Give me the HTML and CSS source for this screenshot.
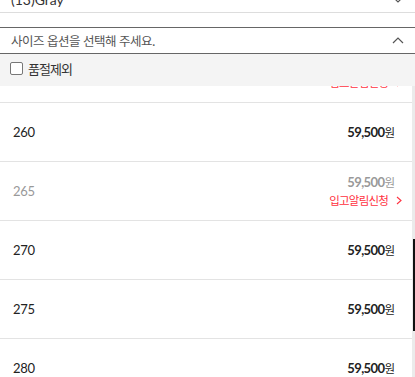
FILE: index.html
```html
<!DOCTYPE html>
<html lang="ko">
<head>
  <meta charset="UTF-8" />
  <title>사이즈 옵션</title>
  <link rel="stylesheet" href="styles.css">
</head>
<body>
  <div class="select color-box">
    <span>(13)Gray</span>
    <svg class="chev" width="10" height="6" viewBox="0 0 10 6"><path d="M1 1 L5 5 L9 1" fill="none" stroke="#555" stroke-width="1.2"/></svg>
  </div>

  <div class="select size-box">
    <span>사이즈 옵션을 선택해 주세요.</span>
    <svg class="chev" width="12" height="7" viewBox="0 0 12 7"><path d="M1 6 L6 1 L11 6" fill="none" stroke="#555" stroke-width="1.2"/></svg>
  </div>

  <div class="filter">
    <label><span class="check"></span>품절제외</label>
  </div>

  <div class="list">
    <ul class="rows">
      <li class="row soldout">
        <span class="size">255</span>
        <div class="right">
          <span class="price">59,500<em>원</em></span>
          <a class="notify">입고알림신청<svg width="6" height="9" viewBox="0 0 6 9"><path d="M1 1 L5 4.5 L1 8" fill="none" stroke="#ff3140" stroke-width="1.1"/></svg></a>
        </div>
      </li>
      <li class="row">
        <span class="size">260</span>
        <div class="right"><span class="price">59,500<em>원</em></span></div>
      </li>
      <li class="row soldout">
        <span class="size">265</span>
        <div class="right">
          <span class="price">59,500<em>원</em></span>
          <a class="notify">입고알림신청<svg width="6" height="9" viewBox="0 0 6 9"><path d="M1 1 L5 4.5 L1 8" fill="none" stroke="#ff3140" stroke-width="1.1"/></svg></a>
        </div>
      </li>
      <li class="row">
        <span class="size">270</span>
        <div class="right"><span class="price">59,500<em>원</em></span></div>
      </li>
      <li class="row">
        <span class="size">275</span>
        <div class="right"><span class="price">59,500<em>원</em></span></div>
      </li>
      <li class="row">
        <span class="size">280</span>
        <div class="right"><span class="price">59,500<em>원</em></span></div>
      </li>
      <li class="row">
        <span class="size">285</span>
        <div class="right"><span class="price">59,500<em>원</em></span></div>
      </li>
    </ul>
    <div class="track"><div class="thumb"></div></div>
  </div>
</body>
</html>
```

FILE: styles.css
```css
body {
  margin: 0;
  width: 415px;
  font-family: "Noto Sans CJK KR", "Noto Sans", sans-serif;
  color: #222;
  background: #fff;
}
.select {
  display: flex;
  align-items: center;
  justify-content: space-between;
  padding: 0 11px 0 11px;
  height: 25px;
}
.color-box {
  margin-top: -13px;
  border-bottom: 1px solid #ddd;
  font-family: "Lato", "Noto Sans CJK KR", sans-serif;
  font-size: 14px;
  color: #333;
}
.size-box {
  margin-top: 14px;
  border-top: 1px solid #666;
  border-bottom: 1px solid #666;
  font-size: 12.5px;
  color: #555;
  letter-spacing: -0.5px;
}
.color-box .chev {
  margin-right: 1px;
}
.filter {
  background: #f4f4f4;
  height: 32px;
  box-sizing: border-box;
  padding: 0 0 3px 10px;
  display: flex;
  align-items: center;
}
.filter label {
  display: flex;
  align-items: center;
  font-size: 13px;
  letter-spacing: -1px;
  color: #333;
}
.check {
  width: 11px;
  height: 11px;
  border: 1px solid #777;
  border-radius: 2px;
  background: #fff;
  margin-right: 5px;
}
.list {
  display: flex;
  height: 291px;
  overflow: hidden;
}
.rows {
  flex: 1;
  list-style: none;
  margin: -42px 0 0 0;
  padding: 0;
}
.row {
  height: 58px;
  border-bottom: 1px solid #e3e3e3;
  display: flex;
  align-items: center;
  justify-content: space-between;
  padding: 0 10px 0 13px;
}
.size {
  font-family: "Lato", sans-serif;
  font-size: 13px;
  letter-spacing: -0.3px;
}
.right {
  display: flex;
  flex-direction: column;
  align-items: flex-end;
  gap: 2px;
}
.price {
  font-family: "Lato", sans-serif;
  font-weight: 700;
  font-size: 13px;
  letter-spacing: -0.6px;
  margin-right: 7px;
}
.price em {
  font-style: normal;
  font-weight: 400;
  font-family: "Noto Sans CJK KR", sans-serif;
  font-size: 11.5px;
  letter-spacing: 0;
}
.soldout .size,
.soldout .price {
  color: #999;
}
.notify {
  color: #ff3140;
  font-size: 11.5px;
  letter-spacing: -0.8px;
  display: flex;
  align-items: center;
  gap: 8px;
}
.track {
  width: 3px;
  background: #ebebeb;
}
.thumb {
  margin: 153px 0 0 1px;
  width: 2px;
  height: 92px;
  background: #111;
}
```
